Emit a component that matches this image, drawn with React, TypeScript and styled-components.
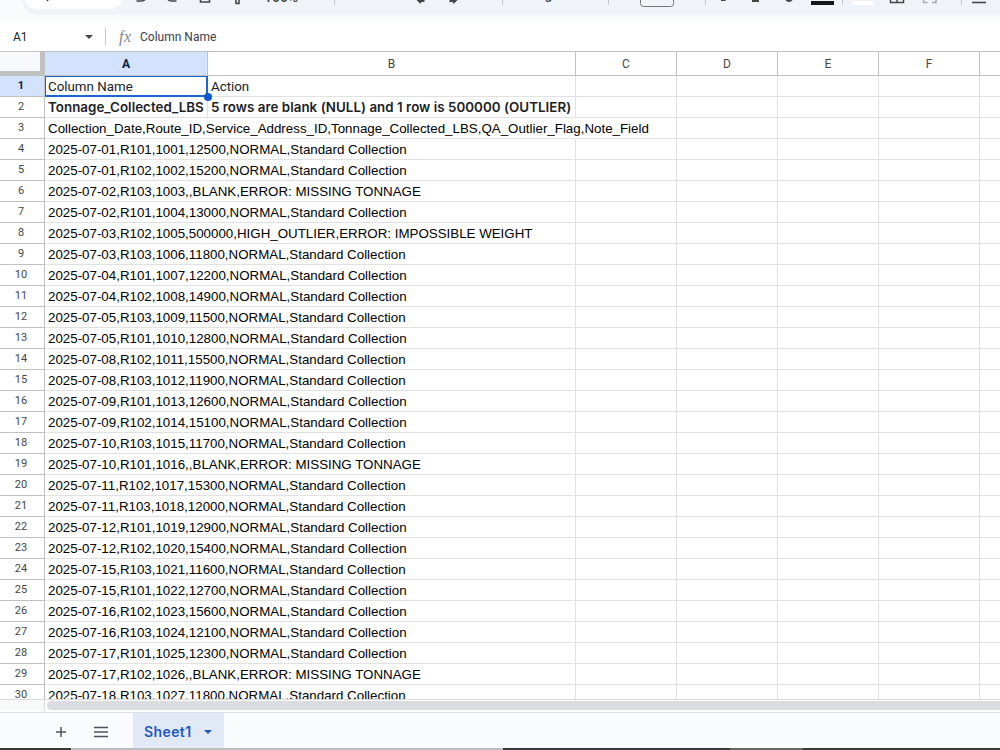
import React from "react";
import styled, { createGlobalStyle } from "styled-components";

const columns = [
  { name: "A", width: 163 },
  { name: "B", width: 368 },
  { name: "C", width: 101 },
  { name: "D", width: 101 },
  { name: "E", width: 101 },
  { name: "F", width: 101 },
  { name: "", width: 101 },
];

const NORMAL = "NORMAL,Standard Collection";
const MISSING = "BLANK,ERROR: MISSING TONNAGE";

const records = [
  `2025-07-01,R101,1001,12500,${NORMAL}`,
  `2025-07-01,R102,1002,15200,${NORMAL}`,
  `2025-07-02,R103,1003,,${MISSING}`,
  `2025-07-02,R101,1004,13000,${NORMAL}`,
  "2025-07-03,R102,1005,500000,HIGH_OUTLIER,ERROR: IMPOSSIBLE WEIGHT",
  `2025-07-03,R103,1006,11800,${NORMAL}`,
  `2025-07-04,R101,1007,12200,${NORMAL}`,
  `2025-07-04,R102,1008,14900,${NORMAL}`,
  `2025-07-05,R103,1009,11500,${NORMAL}`,
  `2025-07-05,R101,1010,12800,${NORMAL}`,
  `2025-07-08,R102,1011,15500,${NORMAL}`,
  `2025-07-08,R103,1012,11900,${NORMAL}`,
  `2025-07-09,R101,1013,12600,${NORMAL}`,
  `2025-07-09,R102,1014,15100,${NORMAL}`,
  `2025-07-10,R103,1015,11700,${NORMAL}`,
  `2025-07-10,R101,1016,,${MISSING}`,
  `2025-07-11,R102,1017,15300,${NORMAL}`,
  `2025-07-11,R103,1018,12000,${NORMAL}`,
  `2025-07-12,R101,1019,12900,${NORMAL}`,
  `2025-07-12,R102,1020,15400,${NORMAL}`,
  `2025-07-15,R103,1021,11600,${NORMAL}`,
  `2025-07-15,R101,1022,12700,${NORMAL}`,
  `2025-07-16,R102,1023,15600,${NORMAL}`,
  `2025-07-16,R103,1024,12100,${NORMAL}`,
  `2025-07-17,R101,1025,12300,${NORMAL}`,
  `2025-07-17,R102,1026,,${MISSING}`,
  `2025-07-18,R103,1027,11800,${NORMAL}`,
];

type RowKind = "heading" | "bold" | "csv";

const rows: { kind: RowKind; cells: string[] }[] = [
  { kind: "heading", cells: ["Column Name", "Action"] },
  {
    kind: "bold",
    cells: [
      "Tonnage_Collected_LBS",
      "5 rows are blank (NULL) and 1 row is 500000 (OUTLIER)",
    ],
  },
  {
    kind: "csv",
    cells: [
      "Collection_Date,Route_ID,Service_Address_ID,Tonnage_Collected_LBS,QA_Outlier_Flag,Note_Field",
    ],
  },
  ...records.map((r) => ({ kind: "csv" as RowKind, cells: [r] })),
];

const Toolbar = () => (
  <TopBar>
    <Pill>
      <svg width="978" height="14" viewBox="22 0 978 14" fill="none">
        <rect x="24" y="-18" width="99" height="27" rx="13.5" fill="#fff" />
        <g stroke="#444746" strokeWidth="1.6">
          <path d="M45 -3l3 4" />
          <path d="M136.500 1h5q3.500 0 4-3" />
          <path d="M176.500 1h-5q-3.500 0-4-3" />
          <path d="M200.500 -4v6h9v-6" />
          <path d="M236 -1v4.500h3v-4.500" />
        </g>
        <g fill="#444746">
          <path d="M416.500 0h8v2h-3.500v1.500h-1z" />
          <path d="M457.500 0h-8v2h3.500v1.500h1z" />
          <path d="M721 -2h6q0 3-3 3h-3z" />
          <path d="M752 -1h7v3h-7z" />
          <path d="M785 -1h8q-1 3-4 3t-4-3z" />
        </g>
        <path
          d="M334.500 0v5M502.500 0v5M608.500 0v5M705.500 0v5M842.500 0v5M961.500 0v5"
          stroke="#c7c7c7"
        />
        <rect x="640.500" y="-14" width="33" height="20.500" rx="3" stroke="#747775" />
        <rect x="811" y="1" width="23" height="4" fill="#111719" />
        <rect x="852" y="1" width="22" height="4" fill="#fff" />
        <path
          d="M890.500 -4v6.500h13v-6.500M897 -4v6.500M890 -1.500h13"
          stroke="#444746"
          strokeWidth="1.500"
        />
        <path d="M923.500 -1v3.500h4M932 2.500h4v-3.500" stroke="#aaa" strokeWidth="1.500" />
        <path d="M972 2.500h14" stroke="#444746" strokeWidth="1.600" />
      </svg>
      <ZoomLevel>100%</ZoomLevel>
      <FontName>Google...</FontName>
    </Pill>
  </TopBar>
);

const App = () => {
  return (
    <Page>
      <GlobalStyle />
      <Toolbar />
      <FormulaBar>
        <NameBox>
          A1
          <Caret />
        </NameBox>
        <FxIcon>fx</FxIcon>
        <Formula>Column Name</Formula>
      </FormulaBar>
      <Sheet>
        <HeaderRow>
          <Corner />
          {columns.map((c, i) => (
            <ColumnHead key={i} $width={c.width} $active={i === 0}>
              {c.name}
            </ColumnHead>
          ))}
        </HeaderRow>
        {rows.map((row, r) => (
          <Row key={r}>
            <RowHead $active={r === 0}>{r + 1}</RowHead>
            {columns.map((c, i) => (
              <Cell
                key={i}
                $width={c.width}
                $open={r > 1 && (i === 0 || (r === 2 && i === 1))}
              >
                {row.cells[i] && (
                  <CellText $kind={row.kind}>{row.cells[i]}</CellText>
                )}
                {r === 0 && i === 0 && (
                  <Selection>
                    <Handle />
                  </Selection>
                )}
              </Cell>
            ))}
          </Row>
        ))}
      </Sheet>
      <ScrollArea>
        <ScrollGutter />
        <ScrollTrack>
          <Thumb />
        </ScrollTrack>
      </ScrollArea>
      <TabBar>
        <svg
          width="133"
          height="36"
          viewBox="0 0 133 36"
          stroke="#50545a"
          strokeWidth="1.500"
        >
          <path d="M56 19h10M61 14v10M94 14.500h14M94 19h14M94 23.500h14" />
        </svg>
        <Tab>
          Sheet1
          <Caret $blue />
        </Tab>
      </TabBar>
      <Taskbar>
        <Strip $width={71} $color="#3b3936" />
        <Strip $width={432} $color="#bdbdbd" />
        <Strip $width={227} $color="#3c3a3b" />
        <Strip $width={73} $color="#6b6762" />
        <Strip $width={197} $color="#3f3a35" />
      </Taskbar>
    </Page>
  );
};

const GlobalStyle = createGlobalStyle`
  body {
    margin: 0;
    overflow: hidden;
  }
  * {
    box-sizing: border-box;
  }
`;

const Page = styled.div`
  width: 1000px;
  height: 750px;
  display: flex;
  flex-direction: column;
  overflow: hidden;
  background: #fff;
  font-family: Roboto, Arial, sans-serif;
`;

const TopBar = styled.div`
  flex: none;
  height: 22px;
  padding-left: 22px;
  background: #f9fbfd;
`;

const Pill = styled.div`
  position: relative;
  height: 15px;
  overflow: hidden;
  background: #f0f4f9;
  border-bottom-left-radius: 15px;
  svg {
    display: block;
  }
`;

const ZoomLevel = styled.span`
  position: absolute;
  left: 242px;
  top: -11px;
  font: 500 14px/16px Roboto, sans-serif;
  color: #444746;
`;

const FontName = styled(ZoomLevel)`
  left: 497px;
  top: -14px;
`;

const FormulaBar = styled.div`
  flex: none;
  display: flex;
  align-items: center;
  height: 30px;
  border-bottom: 1px solid #c0c0c0;
`;

const NameBox = styled.div`
  display: flex;
  align-items: center;
  justify-content: space-between;
  width: 106px;
  height: 17px;
  padding: 0 12px 0 13px;
  border-right: 1px solid #c7c7c7;
  font-size: 12px;
  color: #202124;
`;

const Caret = styled.i<{ $blue?: boolean }>`
  border: 4px solid transparent;
  border-top-color: ${({ $blue }) => ($blue ? "#1f57c3" : "#444746")};
  border-bottom: 0;
`;

const FxIcon = styled.span`
  width: 34px;
  padding-left: 13px;
  font: italic 16px "Liberation Serif", serif;
  letter-spacing: 0.5px;
  color: #80868b;
`;

const Formula = styled.span`
  font-size: 12px;
  color: #3c4043;
`;

const Sheet = styled.div`
  flex: none;
  height: 648px;
  overflow: hidden;
  border-bottom: 1px solid #d9dadb;
`;

const HeaderRow = styled.div`
  display: flex;
  height: 24px;
`;

const Corner = styled.div`
  flex: none;
  width: 45px;
  background: #f8f9fa;
  border-right: 5px solid #c0c0c0;
  border-bottom: 5px solid #c0c0c0;
`;

const ColumnHead = styled.div<{ $width: number; $active: boolean }>`
  flex: none;
  width: ${({ $width }) => $width}px;
  border-right: 1px solid #c0c0c0;
  border-bottom: 1px solid #c0c0c0;
  background: ${({ $active }) => ($active ? "#d3e3fd" : "#fff")};
  color: ${({ $active }) => ($active ? "#041e49" : "#444746")};
  font-size: 12px;
  font-weight: ${({ $active }) => ($active ? 700 : 400)};
  line-height: 24px;
  text-align: center;
`;

const Row = styled.div`
  display: flex;
  height: 21px;
`;

const RowHead = styled.div<{ $active: boolean }>`
  flex: none;
  width: 45px;
  padding-right: 2px;
  border-right: 1px solid #c0c0c0;
  border-bottom: 1px solid #c0c0c0;
  background: ${({ $active }) => ($active ? "#d3e3fd" : "#fff")};
  color: ${({ $active }) => ($active ? "#041e49" : "#444746")};
  font-size: 11px;
  font-weight: ${({ $active }) => ($active ? 700 : 400)};
  line-height: 20px;
  text-align: center;
`;

const Cell = styled.div<{ $width: number; $open: boolean }>`
  position: relative;
  flex: none;
  width: ${({ $width }) => $width}px;
  padding-left: 3px;
  border-right: 1px solid ${({ $open }) => ($open ? "transparent" : "#e1e1e1")};
  border-bottom: 1px solid #e1e1e1;
  white-space: nowrap;
`;

const textStyles = {
  heading: "400 13.33px/21px Roboto, sans-serif",
  bold: "600 13.33px/21px Inter, sans-serif",
  csv: '400 13.33px/21px "Liberation Sans", Arial, sans-serif',
};

const CellText = styled.span<{ $kind: RowKind }>`
  position: relative;
  z-index: 1;
  display: block;
  font: ${({ $kind }) => textStyles[$kind]};
  letter-spacing: ${({ $kind }) => ($kind === "bold" ? "0.04px" : "normal")};
  color: ${({ $kind }) => ($kind === "csv" ? "#000" : "#202124")};
`;

const Selection = styled.div`
  position: absolute;
  z-index: 2;
  inset: 0 -1px -1px 0;
  border: 2px solid #1967d2;
  border-width: 1px 2px 2px 1px;
`;

const Handle = styled.div`
  position: absolute;
  right: -6px;
  bottom: -6px;
  width: 8px;
  height: 8px;
  border-radius: 50%;
  background: #0b57d0;
`;

const ScrollArea = styled.div`
  flex: none;
  display: flex;
  height: 13px;
  border-bottom: 1px solid #e1e3e6;
`;

const ScrollGutter = styled.div`
  width: 45px;
  height: 11px;
  background: #f8f9fa;
  border-right: 1px solid #d9dadb;
`;

const ScrollTrack = styled.div`
  flex: 1;
  padding: 1px 0 0 2px;
`;

const Thumb = styled.div`
  height: 9px;
  border-radius: 5px 0 0 5px;
  background: #dadce0;
`;

const TabBar = styled.div`
  flex: none;
  display: flex;
  height: 35px;
  background: #f9fbfd;
`;

const Tab = styled.div`
  display: flex;
  align-items: center;
  justify-content: space-between;
  width: 91px;
  padding: 2px 12px 0 11px;
  background: #e1e9f7;
  color: #1f57c3;
  font: 600 14px Inter, sans-serif;
  letter-spacing: 0.4px;
`;

const Taskbar = styled.div`
  display: flex;
  height: 2px;
`;

const Strip = styled.div<{ $width: number; $color: string }>`
  width: ${({ $width }) => $width}px;
  background: ${({ $color }) => $color};
`;

export default App;
